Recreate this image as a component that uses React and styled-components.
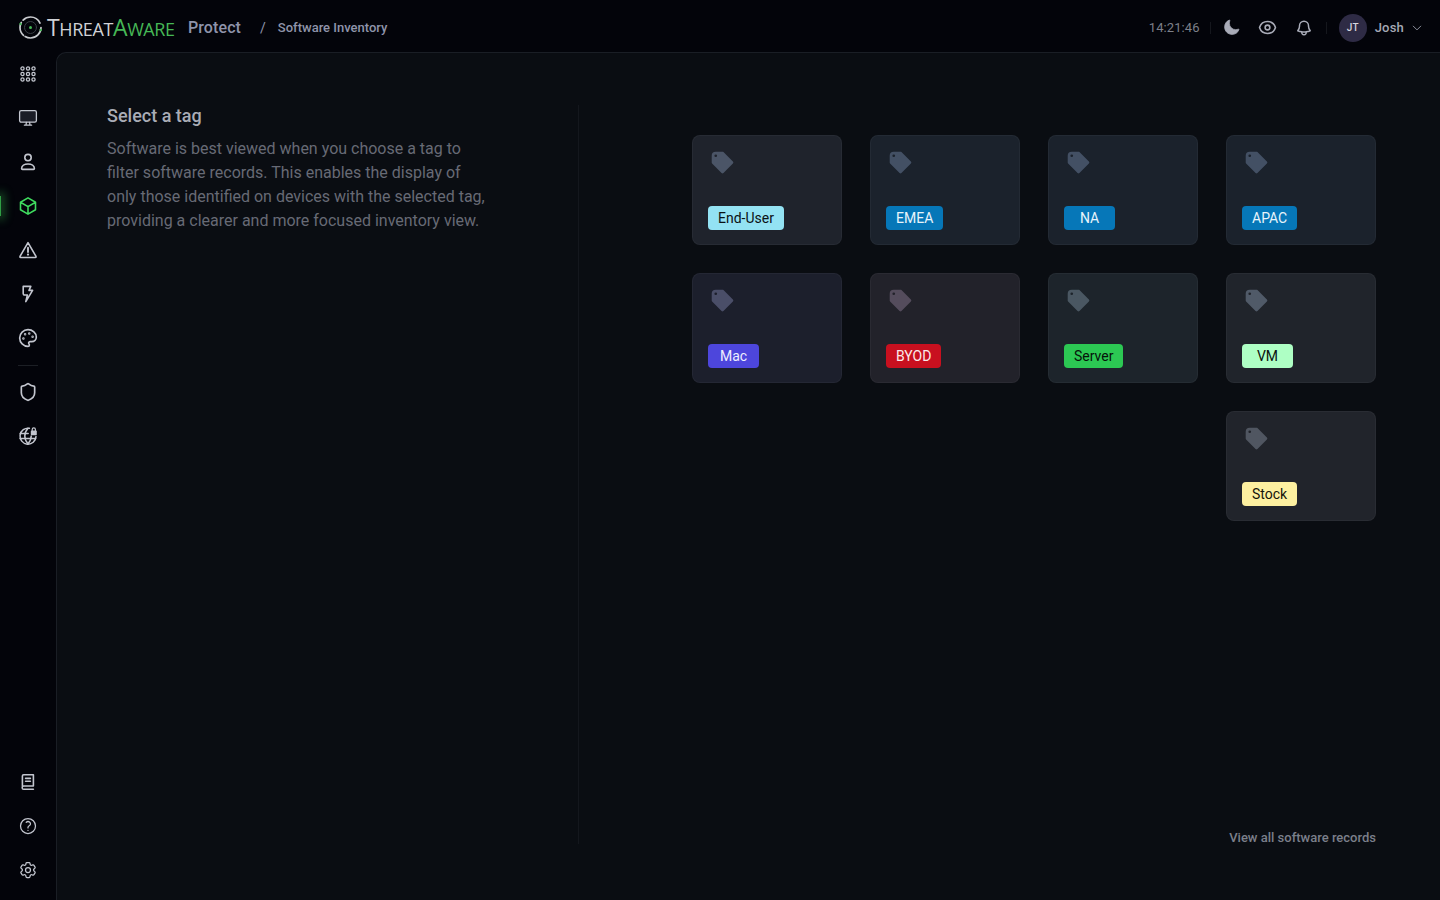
import React from 'react';
import styled, { createGlobalStyle } from 'styled-components';
import { HiTag } from 'react-icons/hi';
import { HiMoon, HiOutlineEye, HiOutlineBell, HiOutlineCube, HiOutlineQuestionMarkCircle, HiOutlineCog6Tooth, HiOutlineChevronDown } from 'react-icons/hi2';
import { LuPalette, LuShield } from 'react-icons/lu';

const Global = createGlobalStyle`
  html, body { margin: 0; padding: 0; height: 100%; background: #03040a; }
  body { font-family: Roboto, "Liberation Sans", sans-serif; overflow: hidden; }
  * { box-sizing: border-box; }
`;

const Shell = styled.div`
  width: 1440px; height: 900px; display: grid;
  grid-template-columns: 56px 1fr; grid-template-rows: 52px 1fr; background: #03040a;
`;
const Header = styled.header`
  grid-column: 1 / 3; display: flex; align-items: center; padding: 3px 17px 0 18px;
`;
const Logo = styled.div`
  display: flex; align-items: center; gap: 4px; width: 158px; white-space: nowrap;
`;
const LogoText = styled.span`
  font-family: "Open Sans", sans-serif; font-weight: 500; font-size: 18px; letter-spacing: -0.4px;
  color: ${p => p.$green ? '#46b856' : '#d0d2d6'}; line-height: 1;
  & > b { font-weight: 500; font-size: 23px; }
`;
const Product = styled.span`
  font-size: 16px; font-weight: 500; color: #8f94aa; margin-left: 12px; letter-spacing: .1px;
`;
const Slash = styled.span`
  font-size: 14px; color: #8f94aa; margin-left: 19px;
`;
const Crumb = styled.span`
  font-size: 13px; font-weight: 500; color: #8f94aa; margin-left: 12px;
`;
const HeaderRight = styled.div`
  margin-left: auto; display: flex; align-items: center; color: #a9acb8;
`;
const Clock = styled.span`
  font-size: 13px; color: #7d8089; letter-spacing: .1px;
`;
const Sep = styled.span`
  width: 1px; height: 12px; background: #15171d; margin: ${p => p.$m};
`;
const TopIcon = styled.span`
  display: flex; width: 20px; justify-content: center; margin-right: ${p => p.$mr ?? 16}px; color: #a9acb8;
  & svg { stroke-width: ${p => p.$sw || 'inherit'}; }
`;
const Avatar = styled.span`
  width: 28px; height: 28px; border-radius: 50%; background: #2e2b45; color: #d6d6de;
  font-size: 10px; font-weight: 500; display: flex; align-items: center; justify-content: center;
`;
const UserName = styled.span`
  font-size: 13px; font-weight: 500; color: #a5a8b5; margin: 0 7px 0 8px; letter-spacing: .2px;
`;
const Sidebar = styled.nav`
  display: flex; flex-direction: column; align-items: center;
`;
const NavItem = styled.div`
  height: 44px; width: 56px; display: flex; align-items: center; justify-content: center; position: relative;
  color: ${p => p.$active ? '#3fdc5f' : '#c3c6cf'};
`;
const Glow = styled.span`
  position: absolute; left: 0; top: 12px; width: 1px; height: 20px; background: #2f9e44;
  box-shadow: 0 0 9px 4px rgba(50,160,70,.4);
`;
const NavRule = styled.div`
  width: 20px; height: 1px; background: #1c1f25; margin: 5px 0 4px;
`;
const NavBottom = styled.div`
  margin-top: auto; padding-bottom: 8px;
`;
const Main = styled.main`
  background: #0a0d12; border-left: 1px solid #1a1e25; border-top: 1px solid #1a1e25;
  border-top-left-radius: 10px; display: grid; grid-template-columns: 522px 1fr; padding: 52px 64px 0 0;
  height: 848px;
`;
const Intro = styled.section`
  height: 739px; border-right: 1px solid #14171d; padding: 0 92px 0 50px;
`;
const Title = styled.h2`
  margin: 0 0 10px; font-size: 18px; line-height: 22px; font-weight: 500; color: #a9acb6;
`;
const Copy = styled.p`
  margin: 0; font-size: 16px; line-height: 24px; color: #676a75;
`;
const Right = styled.section`
  height: 741px; display: flex; flex-direction: column; padding-top: 30px;
`;
const Cards = styled.div`
  display: flex; flex-wrap: wrap; justify-content: flex-end; gap: 28px; width: 684px; margin-left: auto;
`;
const Card = styled.div`
  width: 150px; height: 110px; border: 1px solid rgba(255,255,255,.04); border-radius: 8px; background: ${p => p.$bg};
  background-clip: border-box;
  padding: 13px 15px 14px; display: flex; flex-direction: column; justify-content: space-between;
`;
const TagIcon = styled.div`
  color: ${p => p.$c}; display: flex; margin-left: 1px;
`;
const Badge = styled.span`
  align-self: flex-start; min-width: 51px; height: 24px; padding: 0 10px; border-radius: 4px; font-size: 14px; line-height: 24px;
  text-align: center; background: ${p => p.$bg}; color: ${p => p.$fg};
`;
const ViewAll = styled.a`
  margin-top: auto; align-self: flex-end; font-size: 13px; font-weight: 500; color: #7b7f8a; line-height: 16px;
`;

const Stroke = ({ size = 20, vb = 20, sw = 1.5, children }) => (
  <svg width={size} height={size} viewBox={`0 0 ${vb} ${vb}`} fill="none" stroke="currentColor" strokeWidth={sw} strokeLinecap="round" strokeLinejoin="round">{children}</svg>
);
const AppsIcon = () => (
  <svg width="16" height="16" viewBox="0 0 16 16" fill="none" stroke="currentColor" strokeWidth="1.3">
    {[2.5, 8, 13.5].flatMap(y => [2.5, 8, 13.5].map(x => <circle key={x + '-' + y} cx={x} cy={y} r="1.6" />))}
  </svg>
);
const MonitorIcon = () => (
  <Stroke sw={1.3}>
    <rect x="1.6" y="2.6" width="16.8" height="11.6" rx="1.6" fill="#1b1d27" />
    <path d="M8.4 14.4 8 17M11.6 14.4 12 17M6.4 17.2h7.2" />
  </Stroke>
);
const UserIcon = () => (
  <Stroke sw={1.6}>
    <circle cx="10" cy="5.6" r="3.2" />
    <path d="M3.6 16.6c0-2.9 2.9-4.6 6.4-4.6s6.4 1.7 6.4 4.6c0 .5-.4.8-.9.8H4.5c-.5 0-.9-.3-.9-.8z" />
  </Stroke>
);
const WarningIcon = () => (
  <Stroke sw={1.6}>
    <path d="M10 2.6 18 16.4a.7.7 0 0 1-.6 1.1H2.6a.7.7 0 0 1-.6-1.1L10 2.6z" />
    <path d="M10 7.6v4.4" strokeWidth="1.9" />
    <circle cx="10" cy="14.6" r=".5" strokeWidth="1.3" />
  </Stroke>
);
const BoltIcon = () => (
  <Stroke sw={1.6}>
    <path d="M5.2 2.4h7.6l-1.8 4h3.6L7.8 17.6l1.6-6.6H6.6a1.4 1.4 0 0 1-1.4-1.4V2.4z" />
  </Stroke>
);
const GlobeLockIcon = () => (
  <Stroke sw={1.5}>
    <path d="M11.4 2.3A8 8 0 1 0 18 10.6" />
    <path d="M10 2.2C7.8 4.6 6.8 7.3 6.8 10s1 5.4 3.2 7.8c2.2-2.4 3.2-5.1 3.2-7.8" />
    <path d="M2.2 7.6h8M2.2 12.6h15.4" />
    <rect x="12.8" y="4.6" width="6" height="4.6" rx=".8" fill="currentColor" stroke="none" />
    <path d="M14.2 4.6V3.4a1.6 1.6 0 0 1 3.2 0v1.2" strokeWidth="1.2" />
  </Stroke>
);
const BookIcon = () => (
  <Stroke size={18} vb={18} sw={1.6}>
    <path d="M3.4 13.8V3a1.2 1.2 0 0 1 1.2-1.2h9.8V13H4.8a1.6 1.6 0 0 0 0 3.3h9.6" />
    <path d="M6.6 5.4h4.8M6.6 8.2h4.8" />
  </Stroke>
);
const LogoMark = () => (
  <svg width="25" height="25" viewBox="0 0 25 25" fill="none" strokeLinecap="round">
    <circle cx="12.5" cy="12.5" r="10.5" stroke="#c9cbcf" strokeWidth="1.7" strokeDasharray="22 2 14 3 20 5" />
    <circle cx="12.5" cy="12.5" r="1.5" fill="#46b856" />
    <circle cx="12.5" cy="12.5" r="6" stroke="#3a3f46" strokeWidth="1" />
    <circle cx="2.5" cy="9" r="1.2" fill="#46b856" />
    <circle cx="22.7" cy="15" r="1.2" fill="#46b856" />
  </svg>
);

const cards = [
  ['End-User', '#1f232c', '#4b5567', '#93e2f3', '#0b1115'],
  ['EMEA', '#1b222c', '#435064', '#0677b8', '#e8f4fb'],
  ['NA', '#1b222c', '#435064', '#0677b8', '#e8f4fb'],
  ['APAC', '#1b222c', '#435064', '#0677b8', '#e8f4fb'],
  ['Mac', '#1c1f2c', '#4a4e68', '#4d46dc', '#eeeeff'],
  ['BYOD', '#22222a', '#544c5c', '#c8101f', '#fbeaea'],
  ['Server', '#1d242b', '#4a5762', '#2cc853', '#06130a'],
  ['VM', '#20242b', '#505a68', '#aeffc4', '#0b120d'],
  ['Stock', '#21242b', '#505661', '#fdf0a0', '#15140b'],
];

export default function App() {
  return (
    <>
      <Global />
      <Shell>
        <Header>
          <Logo>
            <LogoMark />
            <span>
              <LogoText><b>T</b>HREAT</LogoText>
              <LogoText $green><b>A</b>WARE</LogoText>
            </span>
          </Logo>
          <Product>Protect</Product>
          <Slash>/</Slash>
          <Crumb>Software Inventory</Crumb>
          <HeaderRight>
            <Clock>14:21:46</Clock>
            <Sep $m="0 11px 0 10px" />
            <TopIcon><HiMoon size={17} /></TopIcon>
            <TopIcon $sw={2}><HiOutlineEye size={19} /></TopIcon>
            <TopIcon $mr={12} $sw={2}><HiOutlineBell size={18} /></TopIcon>
            <Sep $m="0 12px 0 0" />
            <Avatar>JT</Avatar>
            <UserName>Josh</UserName>
            <HiOutlineChevronDown size={12} color="#8a8d99" strokeWidth={2} />
          </HeaderRight>
        </Header>
        <Sidebar>
          <NavItem><AppsIcon /></NavItem>
          <NavItem><MonitorIcon /></NavItem>
          <NavItem><UserIcon /></NavItem>
          <NavItem $active><Glow /><HiOutlineCube size={20} strokeWidth={1.9} /></NavItem>
          <NavItem><WarningIcon /></NavItem>
          <NavItem><BoltIcon /></NavItem>
          <NavItem><LuPalette size={20} /></NavItem>
          <NavRule />
          <NavItem><LuShield size={20} /></NavItem>
          <NavItem><GlobeLockIcon /></NavItem>
          <NavBottom>
            <NavItem><BookIcon /></NavItem>
            <NavItem><HiOutlineQuestionMarkCircle size={20} /></NavItem>
            <NavItem><HiOutlineCog6Tooth size={20} /></NavItem>
          </NavBottom>
        </Sidebar>
        <Main>
          <Intro>
            <Title>Select a tag</Title>
            <Copy>Software is best viewed when you choose a tag to filter software records. This enables the display of only those identified on devices with the selected tag, providing a clearer and more focused inventory view.</Copy>
          </Intro>
          <Right>
            <Cards>
              {cards.map(([name, bg, ic, bbg, bfg]) => (
                <Card key={name} $bg={bg}>
                  <TagIcon $c={ic}><HiTag size={27} /></TagIcon>
                  <Badge $bg={bbg} $fg={bfg}>{name}</Badge>
                </Card>
              ))}
            </Cards>
            <ViewAll>View all software records</ViewAll>
          </Right>
        </Main>
      </Shell>
    </>
  );
}
